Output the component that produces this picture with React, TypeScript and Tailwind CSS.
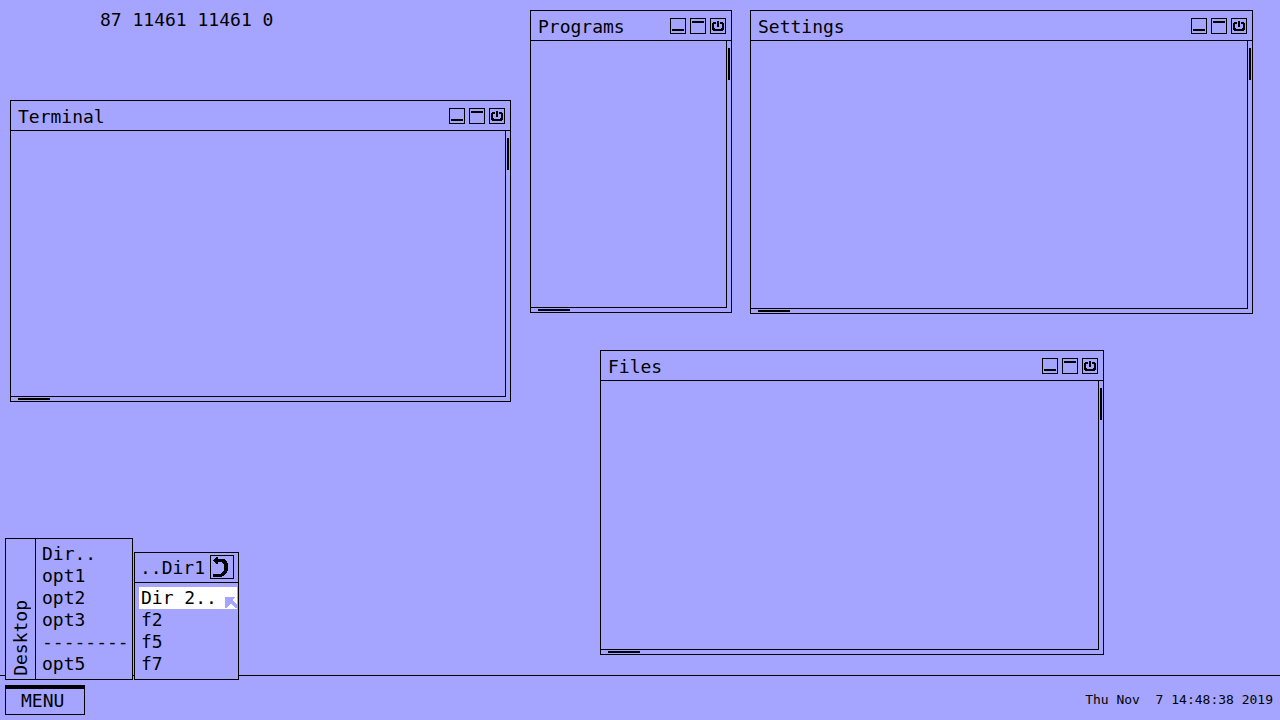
import { useId } from "react";

type DesktopWindow = { title: string; place: string };

const windows: DesktopWindow[] = [
  { title: "Terminal", place: "left-[10px] top-[100px] w-[501px] h-[302px]" },
  { title: "Programs", place: "left-[530px] top-[10px] w-[202px] h-[303px]" },
  { title: "Settings", place: "left-[750px] top-[10px] w-[503px] h-[304px]" },
  { title: "Files", place: "left-[600px] top-[350px] w-[504px] h-[305px]" },
];

const desktopItems = ["Dir..", "opt1", "opt2", "opt3", "--------", "opt5"];
const dirItems = ["Dir 2..", "f2", "f5", "f7"];

function ControlButton({ label, path }: { label: string; path: string }) {
  return (
    <button type="button" aria-label={label} className="block size-4">
      <svg viewBox="0 0 16 16" className="block size-4" shapeRendering="crispEdges" aria-hidden="true">
        <path d="M0 0h16v16H0zM1 1v14h14V1z" fillRule="evenodd" />
        <path d={path} />
      </svg>
    </button>
  );
}

function WindowFrame({ title, place }: DesktopWindow) {
  const id = useId();
  return (
    <section aria-labelledby={id} className={`absolute flex flex-col border border-black bg-[#a5a5ff] ${place}`}>
      <header className="flex h-[30px] shrink-0 items-center justify-between border-b border-black pl-[7px] pr-[5px]">
        <h2 id={id} className="pt-0.5 leading-[22px]">{title}</h2>
        <div className="flex gap-1 pt-px">
          <ControlButton label="Minimize" path="M2 11h12v2H2z" />
          <ControlButton label="Maximize" path="M2 3h12v2H2z" />
          <ControlButton
            label="Close"
            path="M7 3h2v6H7zM3 4h3v2H4v4h1v1h6v-1h1V6h-2V4h3v1h1v7h-1v1H3v-1H2V5h1z"
          />
        </div>
      </header>
      <div className="grid min-h-0 flex-1 grid-cols-[1fr_4px] grid-rows-[1fr_4px]">
        <div className="border-b border-r border-black" />
        <div className="pl-px pt-[7px]">
          <div className="h-8 w-0.5 bg-black" />
        </div>
        <div className="pl-[7px] pt-px">
          <div className="h-0.5 w-8 bg-black" />
        </div>
      </div>
    </section>
  );
}

function DesktopMenu() {
  return (
    <nav aria-label="Desktop" className="flex w-32 border border-black bg-[#a5a5ff]">
      <div className="flex w-[30px] items-center justify-center border-r border-black">
        <span className="rotate-180 self-end pt-[3px] leading-[22px] [writing-mode:vertical-rl]">Desktop</span>
      </div>
      <ul className="flex-1 py-1 pl-1.5">
        {desktopItems.map((item) => (
          <li key={item}>
            {item.startsWith("-") ? (
              <span className="block h-[22px] leading-[22px]">{item}</span>
            ) : (
              <button type="button" className="block h-[22px] leading-[22px]">{item}</button>
            )}
          </li>
        ))}
      </ul>
    </nav>
  );
}

function DirMenu() {
  return (
    <nav aria-label="Dir1" className="w-[105px] border border-black bg-[#a5a5ff]">
      <div className="flex h-[30px] items-center justify-between border-b border-black pl-[5px] pr-1">
        <span className="leading-[22px]">..Dir1</span>
        <button type="button" aria-label="Back" className="mb-px block size-6">
          <svg viewBox="0 0 24 24" className="block size-6" shapeRendering="crispEdges" aria-hidden="true">
            <path d="M0 0h24v24H0zM1 1v22h22V1z" fillRule="evenodd" />
            <path d="M6 2h2v2h7v1h1v1h1v2h1v8h-1v2h-1v1h-1v1h-1v1h-2v1H3v-3h8v-1h1v-1h1v-1h1V9h-1V8h-1V7H8v2H6V8H5V7H4V6H3V5h1V4h1V3h1z" />
          </svg>
        </button>
      </div>
      <ul className="py-1 pl-1 pr-px">
        {dirItems.map((item, index) => (
          <li key={item}>
            <button
              type="button"
              className={
                index === 0
                  ? "flex h-[22px] w-full items-end justify-between bg-white pl-0.5 text-left leading-[22px]"
                  : "flex h-[22px] w-full pl-0.5 text-left leading-[22px]"
              }
            >
              <span>{item}</span>
              {index === 0 && (
                <svg viewBox="0 0 12 12" className="size-3 shrink-0" shapeRendering="crispEdges" aria-hidden="true">
                  <path fill="#a5a5ff" d="M0 0h10v1H9v1H8v2h1v1h1v1h1v1h1v4h-2v-1H9V9H8V8H7V7H5v1H4v1H3v1H2v1H0z" />
                </svg>
              )}
            </button>
          </li>
        ))}
      </ul>
    </nav>
  );
}

export default function App() {
  return (
    <div className="flex min-h-screen flex-col bg-[#a5a5ff] font-['DejaVu_Sans_Mono',monospace] text-lg text-black">
      <main className="relative flex-1">
        <p className="pl-[100px] pt-[9px] leading-[22px]">87 11461 11461 0</p>
        {windows.map((item) => (
          <WindowFrame key={item.title} {...item} />
        ))}
      </main>
      <footer className="relative flex items-center justify-between border-t border-black pb-[5px] pl-[5px] pr-[7px] pt-[9px]">
        <div className="absolute left-[5px] top-1 flex -translate-y-full items-end gap-px">
          <DesktopMenu />
          <DirMenu />
        </div>
        <button
          type="button"
          className="h-[30px] w-20 border border-t-4 border-black pb-0.5 pl-[15px] text-left leading-[22px]"
        >
          MENU
        </button>
        <time className="whitespace-pre text-[13px] leading-4">Thu Nov  7 14:48:38 2019</time>
      </footer>
    </div>
  );
}
